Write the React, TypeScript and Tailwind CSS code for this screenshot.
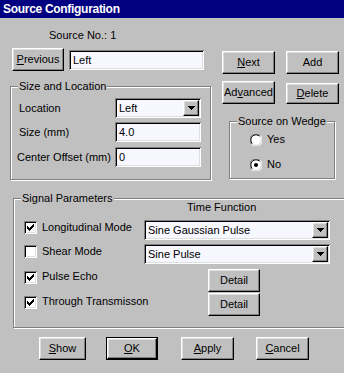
import type { ReactNode } from "react";

const raised =
  "border-t border-l border-t-white border-l-white border-r border-b border-r-black border-b-black shadow-[inset_-1px_-1px_0_#808080,inset_1px_1px_0_#dfdfdf] bg-[#c0c0c0]";
const sunken =
  "shadow-[inset_1px_1px_0_#808080,inset_-1px_-1px_0_#fff,inset_2px_2px_0_#000,inset_-2px_-2px_0_#dfdfdf] bg-[#f7f7ff]";

function Btn({ children, className = "", isDefault = false }: { children: ReactNode; className?: string; isDefault?: boolean }) {
  if (isDefault) {
    return (
      <div className={`flex border border-black ${className}`}>
        <div className={`flex flex-1 items-center justify-center ${raised}`}>{children}</div>
      </div>
    );
  }
  return <div className={`flex items-center justify-center ${raised} ${className}`}>{children}</div>;
}

function Field({ value, className = "" }: { value: string; className?: string }) {
  return (
    <div className={`flex h-[20px] items-center pl-[4px] ${sunken} ${className}`}>
      <span>{value}</span>
    </div>
  );
}

function Arrow() {
  return (
    <svg width="7" height="4" viewBox="0 0 7 4" shapeRendering="crispEdges">
      <path d="M0 0h7v1h-7zM1 1h5v1h-5zM2 2h3v1h-3zM3 3h1v1h-1z" fill="#000" />
    </svg>
  );
}

function Combo({ value, className = "" }: { value: string; className?: string }) {
  return (
    <div className={`flex h-[20px] items-center p-[2px] ${sunken} ${className}`}>
      <span className="flex-1 pl-[2px]">{value}</span>
      <div className={`flex h-[16px] w-[16px] items-center justify-center ${raised}`}>
        <Arrow />
      </div>
    </div>
  );
}

function Check({ checked, className = "" }: { checked: boolean; className?: string }) {
  return (
    <div className={`h-[13px] w-[13px] shrink-0 bg-white shadow-[inset_1px_1px_0_#808080,inset_-1px_-1px_0_#fff,inset_2px_2px_0_#000,inset_-2px_-2px_0_#dfdfdf] ${className}`}>
      {checked && (
        <svg width="13" height="13" viewBox="0 0 13 13" shapeRendering="crispEdges">
          <path
            d="M9 3h1v1h-1zM8 4h2v1h-2zM3 5h1v1h-1zM7 5h3v1h-3zM3 6h2v1h-2zM6 6h3v1h-3zM3 7h5v1h-5zM4 8h3v1h-3zM5 9h1v1h-1z"
            fill="#000"
          />
        </svg>
      )}
    </div>
  );
}

function Radio({ checked }: { checked: boolean }) {
  return (
    <svg width="12" height="12" viewBox="0 0 12 12" className="shrink-0">
      <circle cx="6" cy="6" r="5.5" fill="#fff" />
      <path d="M1.5 10.5 A6 6 0 0 1 10.5 1.5" stroke="#808080" strokeWidth="1" fill="none" />
      <path d="M2.3 9.7 A5 5 0 0 1 9.7 2.3" stroke="#000" strokeWidth="1" fill="none" />
      <path d="M10.5 1.5 A6 6 0 0 1 1.5 10.5" stroke="#fff" strokeWidth="1" fill="none" />
      <path d="M9.7 2.3 A5 5 0 0 1 2.3 9.7" stroke="#dfdfdf" strokeWidth="1" fill="none" />
      {checked && <circle cx="6" cy="6" r="2" fill="#000" />}
    </svg>
  );
}

function Group({ label, className = "", children }: { label: string; className?: string; children: ReactNode }) {
  return (
    <div className={`relative border border-[#808080] shadow-[inset_1px_1px_0_#fff,1px_1px_0_#fff] ${className}`}>
      <span className="absolute left-[7px] top-[-7px] bg-[#c0c0c0] px-[1px] leading-[13px]">{label}</span>
      {children}
    </div>
  );
}

export default function App() {
  return (
    <div className="h-[373px] w-[344px] overflow-hidden bg-[#c0c0c0] font-['Liberation_Sans',Arial,sans-serif] text-[11px] leading-[13px] text-black">
      <div className="flex h-[18px] items-center bg-[#000080] pl-[3px] text-[12px] font-bold tracking-[-0.3px] text-white">
        Source Configuration
      </div>

      <div className="flex h-[162px]">
        <div className="w-[215px] shrink-0">
          <p className="mt-[11px] pl-[49px]">Source No.: 1</p>
          <div className="mt-[6px] flex items-start pl-[12px]">
            <Btn className="h-[23px] w-[52px]">
              <span><u>P</u>revious</span>
            </Btn>
            <Field value="Left" className="ml-[5px] mt-[2px] w-[135px]" />
          </div>
          <Group label="Size and Location" className="ml-[10px] mt-[15px] h-[94px] w-[201px]">
            <div className="flex items-center pl-[8px] pt-[11px]">
              <span className="w-[96px]">Location</span>
              <Combo value="Left" className="w-[86px]" />
            </div>
            <div className="mt-[4px] flex items-center pl-[8px]">
              <span className="w-[96px]">Size (mm)</span>
              <Field value="4.0" className="w-[86px]" />
            </div>
            <div className="mt-[5px] flex items-center pl-[6px]">
              <span className="w-[98px]">Center Offset (mm)</span>
              <Field value="0" className="w-[86px]" />
            </div>
          </Group>
        </div>

        <div className="flex-1">
          <div className="mt-[33px] flex pl-[7px]">
            <Btn className="h-[23px] w-[53px]">
              <span><u>N</u>ext</span>
            </Btn>
            <Btn className="ml-[11px] h-[23px] w-[53px]">Add</Btn>
          </div>
          <div className="mt-[7px] flex items-start pl-[7px]">
            <Btn className="h-[23px] w-[53px]">
              <span>Ad<u>v</u>anced</span>
            </Btn>
            <Btn className="ml-[11px] mt-[2px] h-[21px] w-[53px]">
              <span><u>D</u>elete</span>
            </Btn>
          </div>
          <Group label="Source on Wedge" className="ml-[14px] mt-[17px] h-[58px] w-[106px]">
            <div className="mt-[11px] flex items-center gap-[5px] pl-[20px]">
              <Radio checked={false} />
              <span>Yes</span>
            </div>
            <div className="mt-[12px] flex items-center gap-[5px] pl-[20px]">
              <Radio checked />
              <span>No</span>
            </div>
          </Group>
        </div>
      </div>

      <Group label="Signal Parameters" className="ml-[13px] mt-[18px] h-[130px] w-[340px] shrink-0">
        <p className="mt-[2px] pl-[173px]">Time Function</p>
        <div className="mt-[6px] flex items-start pl-[10px]">
          <div className="flex w-[120px] items-start gap-[5px]">
            <Check checked className="mt-[1px]" />
            <span className="mt-[1px]">Longitudinal Mode</span>
          </div>
          <Combo value="Sine Gaussian Pulse" className="w-[186px]" />
        </div>
        <div className="mt-[4px] flex items-start pl-[10px]">
          <div className="flex w-[120px] items-start gap-[5px]">
            <Check checked={false} className="mt-[1px]" />
            <span className="mt-[1px]">Shear Mode</span>
          </div>
          <Combo value="Sine Pulse" className="w-[186px]" />
        </div>
        <div className="mt-[5px] flex h-[24px] items-start pl-[10px]">
          <div className="flex w-[184px] items-start gap-[5px]">
            <Check checked className="mt-[2px]" />
            <span className="mt-[1px]">Pulse Echo</span>
          </div>
          <Btn className="h-[23px] w-[52px]">Detail</Btn>
        </div>
        <div className="flex h-[24px] items-start pl-[10px]">
          <div className="flex w-[184px] items-start gap-[5px]">
            <Check checked className="mt-[3px]" />
            <span className="mt-[2px]">Through Transmisson</span>
          </div>
          <Btn className="h-[23px] w-[52px]">Detail</Btn>
        </div>
      </Group>

      <div className="mt-[9px] flex">
        <Btn className="ml-[39px] h-[23px] w-[47px]">
          <span><u>S</u>how</span>
        </Btn>
        <Btn isDefault className="ml-[20px] h-[23px] w-[52px]">
          <span><u>O</u>K</span>
        </Btn>
        <Btn className="ml-[23px] h-[23px] w-[53px]">
          <span><u>A</u>pply</span>
        </Btn>
        <Btn className="ml-[22px] h-[23px] w-[53px]">
          <span><u>C</u>ancel</span>
        </Btn>
      </div>
    </div>
  );
}
